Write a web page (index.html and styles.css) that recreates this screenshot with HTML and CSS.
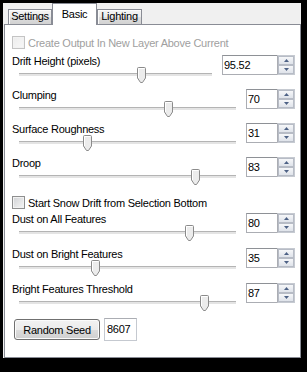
FILE: index.html
```html
<!DOCTYPE html>
<html>
<head>
<meta charset="utf-8">
<link rel="stylesheet" href="styles.css">
</head>
<body>
<div class="window">
  <div class="tabs">
    <div class="tab tab-settings">Settings</div>
    <div class="tab tab-basic active">Basic</div>
    <div class="tab tab-lighting">Lighting</div>
  </div>
  <div class="panel">
    <div class="check disabled"><span class="box"></span><span>Create Output In New Layer Above Current</span></div>

    <div class="group first">
      <div class="g-left">
        <div class="label">Drift Height (pixels)</div>
        <div class="slider"><div class="track"></div><svg class="thumb" style="left:118px" width="9" height="16" viewBox="0 0 9 16"><path d="M0.5 1.5 Q0.5 0.5 1.5 0.5 H7.5 Q8.5 0.5 8.5 1.5 V11 L5.5 15.5 H3.5 L0.5 11 Z" fill="#ececec" stroke="#8b8b8b"/><path d="M1.5 11 V1.5 H7.5" fill="none" stroke="#fff"/></svg></div>
      </div>
      <div class="spin"><div class="num wide">95.52</div><div class="arrows"><div class="arr"><svg width="5" height="3" viewBox="0 0 5 3"><path d="M0 3 L2.5 0 L5 3 Z" fill="#4d6185"/></svg></div><div class="arr"><svg width="5" height="3" viewBox="0 0 5 3"><path d="M0 0 L2.5 3 L5 0 Z" fill="#4d6185"/></svg></div></div></div>
    </div>

    <div class="group">
      <div class="g-left">
        <div class="label">Clumping</div>
        <div class="slider"><div class="track"></div><svg class="thumb" style="left:145px" width="9" height="16" viewBox="0 0 9 16"><path d="M0.5 1.5 Q0.5 0.5 1.5 0.5 H7.5 Q8.5 0.5 8.5 1.5 V11 L5.5 15.5 H3.5 L0.5 11 Z" fill="#ececec" stroke="#8b8b8b"/><path d="M1.5 11 V1.5 H7.5" fill="none" stroke="#fff"/></svg></div>
      </div>
      <div class="spin"><div class="num">70</div><div class="arrows"><div class="arr"><svg width="5" height="3" viewBox="0 0 5 3"><path d="M0 3 L2.5 0 L5 3 Z" fill="#4d6185"/></svg></div><div class="arr"><svg width="5" height="3" viewBox="0 0 5 3"><path d="M0 0 L2.5 3 L5 0 Z" fill="#4d6185"/></svg></div></div></div>
    </div>

    <div class="group">
      <div class="g-left">
        <div class="label">Surface Roughness</div>
        <div class="slider"><div class="track"></div><svg class="thumb" style="left:64px" width="9" height="16" viewBox="0 0 9 16"><path d="M0.5 1.5 Q0.5 0.5 1.5 0.5 H7.5 Q8.5 0.5 8.5 1.5 V11 L5.5 15.5 H3.5 L0.5 11 Z" fill="#ececec" stroke="#8b8b8b"/><path d="M1.5 11 V1.5 H7.5" fill="none" stroke="#fff"/></svg></div>
      </div>
      <div class="spin"><div class="num">31</div><div class="arrows"><div class="arr"><svg width="5" height="3" viewBox="0 0 5 3"><path d="M0 3 L2.5 0 L5 3 Z" fill="#4d6185"/></svg></div><div class="arr"><svg width="5" height="3" viewBox="0 0 5 3"><path d="M0 0 L2.5 3 L5 0 Z" fill="#4d6185"/></svg></div></div></div>
    </div>

    <div class="group">
      <div class="g-left">
        <div class="label">Droop</div>
        <div class="slider"><div class="track"></div><svg class="thumb" style="left:172px" width="9" height="16" viewBox="0 0 9 16"><path d="M0.5 1.5 Q0.5 0.5 1.5 0.5 H7.5 Q8.5 0.5 8.5 1.5 V11 L5.5 15.5 H3.5 L0.5 11 Z" fill="#ececec" stroke="#8b8b8b"/><path d="M1.5 11 V1.5 H7.5" fill="none" stroke="#fff"/></svg></div>
      </div>
      <div class="spin"><div class="num">83</div><div class="arrows"><div class="arr"><svg width="5" height="3" viewBox="0 0 5 3"><path d="M0 3 L2.5 0 L5 3 Z" fill="#4d6185"/></svg></div><div class="arr"><svg width="5" height="3" viewBox="0 0 5 3"><path d="M0 0 L2.5 3 L5 0 Z" fill="#4d6185"/></svg></div></div></div>
    </div>

    <div class="check mid"><span class="box"></span><span>Start Snow Drift from Selection Bottom</span></div>

    <div class="group tall">
      <div class="g-left">
        <div class="label">Dust on All Features</div>
        <div class="slider"><div class="track"></div><svg class="thumb" style="left:166px" width="9" height="16" viewBox="0 0 9 16"><path d="M0.5 1.5 Q0.5 0.5 1.5 0.5 H7.5 Q8.5 0.5 8.5 1.5 V11 L5.5 15.5 H3.5 L0.5 11 Z" fill="#ececec" stroke="#8b8b8b"/><path d="M1.5 11 V1.5 H7.5" fill="none" stroke="#fff"/></svg></div>
      </div>
      <div class="spin"><div class="num">80</div><div class="arrows"><div class="arr"><svg width="5" height="3" viewBox="0 0 5 3"><path d="M0 3 L2.5 0 L5 3 Z" fill="#4d6185"/></svg></div><div class="arr"><svg width="5" height="3" viewBox="0 0 5 3"><path d="M0 0 L2.5 3 L5 0 Z" fill="#4d6185"/></svg></div></div></div>
    </div>

    <div class="group tall">
      <div class="g-left">
        <div class="label">Dust on Bright Features</div>
        <div class="slider"><div class="track"></div><svg class="thumb" style="left:72px" width="9" height="16" viewBox="0 0 9 16"><path d="M0.5 1.5 Q0.5 0.5 1.5 0.5 H7.5 Q8.5 0.5 8.5 1.5 V11 L5.5 15.5 H3.5 L0.5 11 Z" fill="#ececec" stroke="#8b8b8b"/><path d="M1.5 11 V1.5 H7.5" fill="none" stroke="#fff"/></svg></div>
      </div>
      <div class="spin"><div class="num">35</div><div class="arrows"><div class="arr"><svg width="5" height="3" viewBox="0 0 5 3"><path d="M0 3 L2.5 0 L5 3 Z" fill="#4d6185"/></svg></div><div class="arr"><svg width="5" height="3" viewBox="0 0 5 3"><path d="M0 0 L2.5 3 L5 0 Z" fill="#4d6185"/></svg></div></div></div>
    </div>

    <div class="group tall">
      <div class="g-left">
        <div class="label">Bright Features Threshold</div>
        <div class="slider"><div class="track"></div><svg class="thumb" style="left:181px" width="9" height="16" viewBox="0 0 9 16"><path d="M0.5 1.5 Q0.5 0.5 1.5 0.5 H7.5 Q8.5 0.5 8.5 1.5 V11 L5.5 15.5 H3.5 L0.5 11 Z" fill="#ececec" stroke="#8b8b8b"/><path d="M1.5 11 V1.5 H7.5" fill="none" stroke="#fff"/></svg></div>
      </div>
      <div class="spin"><div class="num">87</div><div class="arrows"><div class="arr"><svg width="5" height="3" viewBox="0 0 5 3"><path d="M0 3 L2.5 0 L5 3 Z" fill="#4d6185"/></svg></div><div class="arr"><svg width="5" height="3" viewBox="0 0 5 3"><path d="M0 0 L2.5 3 L5 0 Z" fill="#4d6185"/></svg></div></div></div>
    </div>

    <div class="seedrow">
      <button class="btn">Random Seed</button>
      <div class="seed">8607</div>
    </div>
  </div>
</div>
</body>
</html>
```

FILE: styles.css
```css
* { box-sizing: border-box; }

body {
  margin: 0;
  background: #000;
  font-family: "Liberation Sans", Arial, sans-serif;
  font-size: 11px;
  letter-spacing: -0.25px;
  color: #000;
}

.window {
  margin: 3px 0 0 3px;
  width: 298px;
  height: 355px;
  background: #f0f0f0;
  padding-left: 1px;
  display: flex;
  flex-direction: column;
}

.tabs {
  display: flex;
  align-items: flex-end;
  height: 21px;
  padding-left: 4px;
  flex: none;
}

.tab {
  height: 15px;
  line-height: 13px;
  border: 1px solid #898c95;
  border-bottom: none;
  background: linear-gradient(#f4f4f4, #ececec 50%, #dedede 51%, #d2d2d2);
  box-shadow: inset 1px 1px 0 #fbfbfb;
  text-align: center;
}

.tab-settings { width: 44px; }
.tab-lighting { width: 45px; }

.tab.active {
  width: 45px;
  height: 22px;
  line-height: 20px;
  margin-bottom: -1px;
  background: #fff;
  box-shadow: none;
  position: relative;
  z-index: 1;
}

.panel {
  flex: 1;
  background: #fff;
  border: 1px solid #898c95;
  padding: 9px 5px 0 7px;
  display: flex;
  flex-direction: column;
}

.check {
  display: flex;
  align-items: center;
  gap: 3px;
  height: 17px;
  flex: none;
}

.check.mid {
  margin-top: 3px;
  margin-bottom: 2px;
}

.box {
  width: 13px;
  height: 13px;
  border: 1px solid #8e8f8f;
  background: linear-gradient(135deg, #d0d2d5, #f6f6f6);
  box-shadow: inset 0 0 0 1px #f2f2f2;
  flex: none;
}

.check.disabled { color: #a0a0a0; }
.check.disabled .box {
  border-color: #c4c4c4;
  background: linear-gradient(135deg, #ececec, #f8f8f8);
}

.group {
  display: flex;
  height: 34px;
  flex: none;
}

.group.first { margin-top: 4px; }
.group.tall { height: 35px; }

.g-left {
  flex: 1;
  display: flex;
  flex-direction: column;
}

.label {
  height: 12px;
  line-height: 12px;
}

.slider {
  position: relative;
  height: 22px;
  margin: 0 10px 0 7px;
}

.track {
  margin-top: 6px;
  height: 3px;
  border-top: 1px solid #b4b4b4;
  background: #e4e4e4;
}

.thumb {
  position: absolute;
  top: 0;
  display: block;
}

.spin {
  display: flex;
  height: 20px;
  flex: none;
}

.num {
  width: 31px;
  height: 20px;
  border: 1px solid #abadb3;
  border-top-color: #8e9196;
  border-right: none;
  background: #fff;
  padding-left: 1px;
  line-height: 18px;
}

.num.wide { width: 55px; }

.arrows {
  width: 18px;
  height: 20px;
  display: flex;
  flex-direction: column;
  border: 1px solid #c6cad1;
  border-left: 1px solid #abadb3;
  background: #fff;
}

.arr {
  flex: 1;
  display: flex;
  align-items: center;
  justify-content: center;
  border: 1px solid #b7bcc6;
  background: linear-gradient(#f6f7f9, #dfe3ea);
}

.arr svg { display: block; }

.seedrow {
  display: flex;
  align-items: center;
  gap: 4px;
  height: 23px;
  padding-left: 2px;
  flex: none;
}

.btn {
  width: 86px;
  height: 21px;
  padding: 0;
  border: 1px solid #707070;
  border-radius: 3px;
  background: linear-gradient(#f2f2f2, #ebebeb 50%, #dddddd 51%, #cfcfcf);
  box-shadow: inset 0 0 0 1px #fbfbfb;
  font: inherit;
  letter-spacing: inherit;
  color: #000;
}

.seed {
  width: 33px;
  height: 23px;
  border: 1px solid #c5c9d0;
  border-top-color: #abadb3;
  padding-left: 2px;
  line-height: 21px;
  background: #fff;
}
```
